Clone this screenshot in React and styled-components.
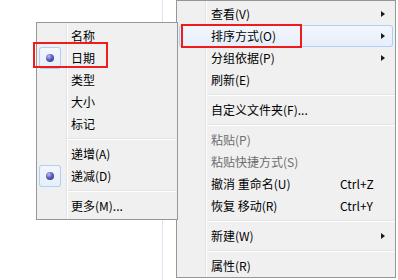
import React from 'react';
import styled, { createGlobalStyle } from 'styled-components';

const GlobalStyle = createGlobalStyle`
  html, body {
    margin: 0;
    padding: 0;
    background: #fff;
  }
  body {
    font-family: "Noto Sans CJK SC", "Microsoft YaHei", sans-serif;
    font-size: 12px;
    color: #000;
  }
`;

const Desktop = styled.div`
  position: relative;
  display: flex;
  width: 398px;
  height: 280px;
  overflow: hidden;
  background: #fff;
`;

const Pane = styled.div`
  width: 162px;
  border-right: 1px solid #dbe5f1;
`;

const Menu = styled.ul`
  position: absolute;
  left: ${p => p.$left}px;
  top: ${p => p.$top}px;
  z-index: ${p => p.$z};
  width: ${p => p.$width}px;
  box-sizing: border-box;
  margin: 0;
  padding: 2px 0 ${p => p.$padBottom}px;
  list-style: none;
  border: 1px solid #979797;
  background:
    linear-gradient(to right,
      transparent ${p => p.$gutter}px,
      #e2e3e3 ${p => p.$gutter}px, #e2e3e3 ${p => p.$gutter + 1}px,
      #fff ${p => p.$gutter + 1}px, #fff ${p => p.$gutter + 2}px,
      transparent ${p => p.$gutter + 2}px),
    #f0f0f0;
`;

const Item = styled.li`
  position: relative;
  display: flex;
  align-items: center;
  height: 22px;
  margin: 0 2px;
  border-radius: 3px;
  white-space: nowrap;
  line-height: 22px;
  color: ${p => (p.$disabled ? '#6d6d6d' : '#000')};
  background: ${p => (p.$hot ? 'linear-gradient(#f3f7fd, #e6eef9)' : 'transparent')};
  box-shadow: ${p => (p.$hot ? 'inset 0 0 0 1px #aecff7' : 'none')};
`;

const IconCell = styled.span`
  display: flex;
  align-items: center;
  justify-content: center;
  flex: none;
  width: 22px;
  height: 22px;
  box-sizing: border-box;
  border-radius: 3px;
  ${p => p.$checked && `
    background: linear-gradient(#f3f7fd, #e6eef9);
    box-shadow: inset 0 0 0 1px #aecff7;
  `}
`;

const Dot = styled.span`
  width: 8px;
  height: 8px;
  border-radius: 50%;
  background: radial-gradient(circle at 35% 30%, #b9bdf0 0, #5a60c0 45%, #262a7c 100%);
`;

const Label = styled.span`
  flex: 1;
  margin-left: 10px;
`;

const Shortcut = styled.span`
  flex: none;
  width: 40px;
`;

const ArrowCell = styled.span`
  display: flex;
  align-items: center;
  flex: none;
  width: 13px;
  height: 22px;
  padding-left: 1px;
  box-sizing: border-box;
`;

const Arrow = styled.span`
  width: 0;
  height: 0;
  border-left: 4px solid #1a1a1a;
  border-top: 3.5px solid transparent;
  border-bottom: 3.5px solid transparent;
`;

const Separator = styled.li`
  height: 8px;
  margin-left: ${p => p.$gutter + 2}px;
  box-sizing: border-box;
  padding-top: 3px;

  &::after {
    content: '';
    display: block;
    height: 1px;
    background: #e2e3e3;
    border-bottom: 1px solid #fff;
  }
`;

const Mark = styled.span`
  position: absolute;
  left: ${p => p.$x}px;
  top: ${p => p.$y}px;
  width: ${p => p.$w}px;
  height: ${p => p.$h}px;
  box-sizing: border-box;
  border: 2px solid #ee1c1c;
  pointer-events: none;
`;

const sortItems = [
  { label: '名称' },
  { label: '日期', checked: true, mark: { x: -6, y: -5, w: 75, h: 26 } },
  { label: '类型' },
  { label: '大小' },
  { label: '标记' },
  'sep',
  { label: '递增(A)' },
  { label: '递减(D)', checked: true },
  'sep',
  { label: '更多(M)...' },
];

const contextItems = [
  { label: '查看(V)', sub: true },
  { label: '排序方式(O)', sub: true, hot: true, mark: { x: 2, y: -1, w: 121, h: 24 } },
  { label: '分组依据(P)', sub: true },
  { label: '刷新(E)' },
  'sep',
  { label: '自定义文件夹(F)...' },
  'sep',
  { label: '粘贴(P)', disabled: true },
  { label: '粘贴快捷方式(S)', disabled: true },
  { label: '撤消 重命名(U)', shortcut: 'Ctrl+Z' },
  { label: '恢复 移动(R)', shortcut: 'Ctrl+Y' },
  'sep',
  { label: '新建(W)', sub: true },
  'sep',
  { label: '属性(R)' },
];

function MenuList({ items, gutter, ...rest }) {
  return (
    <Menu $gutter={gutter} {...rest}>
      {items.map((it, i) =>
        it === 'sep' ? (
          <Separator key={i} $gutter={gutter} />
        ) : (
          <Item key={i} $hot={it.hot} $disabled={it.disabled}>
            <IconCell $checked={it.checked}>{it.checked && <Dot />}</IconCell>
            <Label>{it.label}</Label>
            {it.shortcut && <Shortcut>{it.shortcut}</Shortcut>}
            <ArrowCell>{it.sub && <Arrow />}</ArrowCell>
            {it.mark && <Mark $x={it.mark.x} $y={it.mark.y} $w={it.mark.w} $h={it.mark.h} />}
          </Item>
        )
      )}
    </Menu>
  );
}

export default function App() {
  return (
    <>
      <GlobalStyle />
      <Desktop>
        <Pane />
        <MenuList items={contextItems} gutter={28} $left={176} $top={0} $width={220} $padBottom={0} $z={1} />
        <MenuList items={sortItems} gutter={29} $left={36} $top={22} $width={142} $padBottom={2} $z={2} />
      </Desktop>
    </>
  );
}
